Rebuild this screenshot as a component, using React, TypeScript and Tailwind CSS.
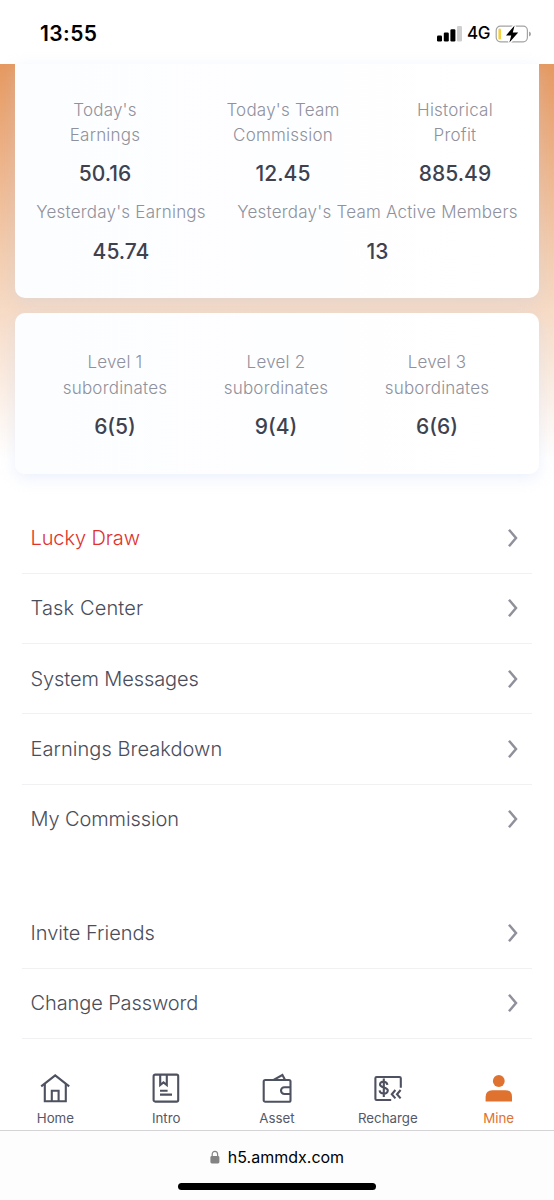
import React from 'react'

const Chevron = () => (
    <svg width="12" height="20" viewBox="0 0 12 20" fill="none" stroke="#8f909b" strokeWidth="2.5">
        <path d="M2 1.8 L9 10 L2 18.2" />
    </svg>
)

const Stat = ({ label, value, className, valueClass = 'leading-[38px]' }: { label: string; value: string; className: string; valueClass?: string }) => (
    <div className={`flex shrink-0 flex-col items-center text-center ${className}`}>
        <span className="text-[17px] font-[330] leading-[25.5px] tracking-[0.22px] text-[#8f919c]">{label}</span>
        <span className={`mt-1.5 text-[21px] font-medium text-[#3e424f] ${valueClass}`}>{value}</span>
    </div>
)

const Row = ({ label, className = 'text-[#4a4d5b]' }: { label: string; className?: string }) => (
    <a className={`mx-[22px] flex h-[70.3px] items-center justify-between border-b border-[#f1f1f3] pl-[8.5px] pr-[13px] text-[20px] font-[340] ${className}`}>
        <span>{label}</span>
        <Chevron />
    </a>
)

const HomeIcon = () => (
    <svg width="32" height="32" viewBox="0 0 32 32" fill="none" stroke="#4e5260" strokeWidth="2.1">
        <path d="M2.2 14.4 L16.2 3.4 L30.2 14.4" />
        <path d="M5.8 12 V29.2 H26.8 V12" />
        <path d="M12.8 29 V18.8 H19.6 V29" />
    </svg>
)

const IntroIcon = () => (
    <svg width="32" height="32" viewBox="0 0 32 32" fill="none" stroke="#4e5260" strokeWidth="2.1">
        <rect x="3.6" y="2.6" width="24.6" height="27" rx="1.6" />
        <path d="M10.2 2.6 V13 L13.5 10.4 L16.8 13 V2.6" />
        <path d="M10 18.8 H17.6 M10 22.6 H22" />
    </svg>
)

const AssetIcon = () => (
    <svg width="32" height="32" viewBox="0 0 32 32" fill="none" stroke="#4e5260" strokeWidth="2.1">
        <rect x="2.7" y="8" width="26.8" height="21.8" rx="1.6" />
        <path d="M12.6 7.8 L21.4 3 L24 7.8" />
        <path d="M29.5 15.2 H23.4 A3.4 3.4 0 0 0 23.4 22 H29.5" />
    </svg>
)

const RechargeIcon = () => (
    <svg width="32" height="32" viewBox="0 0 32 32" fill="none" stroke="#4e5260" strokeWidth="2.1">
        <path d="M19.2 28 H4.6 Q3.4 28 3.4 26.8 V6.2 Q3.4 5 4.6 5 H27.4 Q28.8 5 28.8 6.2 V15.8" />
        <path d="M15.4 12.8 C14.8 8.6 8 8.8 8 12.4 C8 16.2 15.8 14.8 15.8 18.6 C15.8 22.6 8 22.6 7.6 18.4 M11.8 6.6 V25" />
        <path d="M23.4 18 L19.8 22.2 L23.4 26.4 M28.6 18 L25 22.2 L28.6 26.4" />
    </svg>
)

const MineIcon = () => (
    <svg width="32" height="32" viewBox="0 0 32 32" fill="#e07230">
        <circle cx="15.8" cy="9" r="5.9" />
        <path d="M2.6 29.4 V25 Q2.6 18.2 9.4 18.2 H22.2 Q29 18.2 29 25 V29.4 Z" />
    </svg>
)

const tabs = [
    { label: 'Home', icon: <HomeIcon /> },
    { label: 'Intro', icon: <IntroIcon /> },
    { label: 'Asset', icon: <AssetIcon /> },
    { label: 'Recharge', icon: <RechargeIcon /> },
    { label: 'Mine', icon: <MineIcon />, active: true },
]

export default function App() {
    return (
        <div className="flex h-[1200px] w-full flex-col overflow-hidden bg-white font-['Inter','Liberation_Sans',sans-serif]">
            <header className="flex h-16 shrink-0 items-center justify-between pl-10 pr-[22px] pt-[3px]">
                <span className="text-[21px] font-semibold tracking-[0.4px]">13:55</span>
                <div className="flex items-center">
                    <svg width="26" height="17" viewBox="0 0 26 17">
                        <rect x="0" y="10.5" width="5" height="6" rx="1.2" />
                        <rect x="6.8" y="7.6" width="5" height="8.9" rx="1.2" />
                        <rect x="13.4" y="4.2" width="5" height="12.3" rx="1.2" />
                        <rect x="20" y="1" width="5" height="15.5" rx="1.2" fill="#cfcfcf" />
                    </svg>
                    <span className="ml-[4px] w-6 pt-px text-[17px] font-[450] tracking-[-0.4px]">4G</span>
                    <svg className="ml-[4px]" width="37" height="18" viewBox="0 0 37 18">
                        <rect x="1.2" y="1.2" width="31.2" height="15.6" rx="4.2" fill="none" stroke="#a3a3a3" strokeWidth="1.2" />
                        <rect x="3.4" y="3.5" width="2.6" height="11" rx="1.2" fill="#f4cf3f" />
                        <path d="M34 6.5 Q36 7.4 36 9 Q36 10.6 34 11.5 Z" fill="#a3a3a3" />
                        <path d="M19.6 0.4 L11 10.4 H16.2 L14.4 17.6 L23.2 7.6 H17.8 Z" stroke="#fff" strokeWidth="3" paintOrder="stroke" />
                    </svg>
                </div>
            </header>

            <section className="flex h-[439px] shrink-0 flex-col gap-[15px] bg-linear-to-b from-[#e69960] via-[#f3cfb2] via-45% to-white to-90% px-[15px]">
                <div className="flex h-[234px] flex-col gap-[7px] rounded-b-[10px] bg-linear-to-r from-[#fcfdff] to-white pt-[33.5px] shadow-[0_4px_15px_rgba(190,205,245,0.3)]">
                    <div className="flex pl-[39px]">
                        <Stat label="Today's Earnings" value="50.16" className="w-[102px]" />
                        <Stat label="Today's Team Commission" value="12.45" className="ml-[66px] w-[122px]" />
                        <Stat label="Historical Profit" value="885.49" className="ml-[65px] w-[92px]" />
                    </div>
                    <div className="flex gap-[31px] whitespace-nowrap pl-[21px]">
                        <Stat label="Yesterday's Earnings" value="45.74" className="w-[170px]" valueClass="leading-[41px]" />
                        <Stat label="Yesterday's Team Active Members" value="13" className="w-[281px]" valueClass="leading-[41px]" />
                    </div>
                </div>
                <div className="flex h-[161px] gap-[53px] rounded-[10px] bg-linear-to-r from-[#fcfdff] to-white pl-[46px] pt-[37px] shadow-[0_4px_15px_rgba(190,205,245,0.3)]">
                    <Stat label="Level 1 subordinates" value="6(5)" className="w-[108px]" valueClass="leading-10" />
                    <Stat label="Level 2 subordinates" value="9(4)" className="w-[108px]" valueClass="leading-10" />
                    <Stat label="Level 3 subordinates" value="6(6)" className="w-[108px]" valueClass="leading-10" />
                </div>
            </section>

            <section className="mt-[0.5px] shrink-0">
                <Row label="Lucky Draw" className="tracking-[-0.1px] text-[#e0312a]" />
                <Row label="Task Center" className="tracking-[0.15px] text-[#4a4d5b]" />
                <Row label="System Messages" className="tracking-[-0.1px] text-[#4a4d5b]" />
                <Row label="Earnings Breakdown" className="tracking-[0.05px] text-[#4a4d5b]" />
                <Row label="My Commission" className="border-transparent tracking-[-0.1px] text-[#4a4d5b]" />
            </section>

            <section className="mt-[43.5px] shrink-0">
                <Row label="Invite Friends" />
                <Row label="Change Password" className="tracking-[-0.1px] text-[#4a4d5b]" />
            </section>

            <nav className="mt-auto flex h-[92px] shrink-0 border-b border-[#d4d4d6] pt-[33px]">
                {tabs.map((tab) => (
                    <div key={tab.label} className="flex flex-1 flex-col items-center">
                        {tab.icon}
                        <span className={tab.active ? 'mt-1 text-[13.3px] font-[380] leading-5 text-[#e07230]' : 'mt-1 text-[13.3px] font-[380] leading-5 text-[#555868]'}>{tab.label}</span>
                    </div>
                ))}
            </nav>

            <footer className="flex h-[69px] shrink-0 flex-col items-center bg-[#fdfdfe] pt-[14px]">
                <div className="flex h-6 items-center">
                    <svg width="10" height="14" viewBox="0 0 10 14">
                        <rect x="0.4" y="6" width="9" height="7.4" rx="1.4" fill="#838383" />
                        <path d="M2.2 6.5 V4.2 A2.7 2.9 0 0 1 7.6 4.2 V6.5" fill="none" stroke="#838383" strokeWidth="1.2" />
                    </svg>
                    <span className="ml-2 text-[16px] text-black">h5.ammdx.com</span>
                </div>
                <div className="mt-[13.5px] h-[7px] w-[198px] shrink-0 rounded-full bg-black" />
            </footer>
        </div>
    )
}
